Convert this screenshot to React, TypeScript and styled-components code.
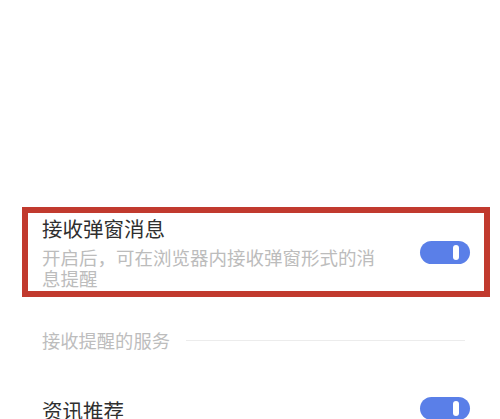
import React from "react";
import styled, { createGlobalStyle } from "styled-components";

const Global = createGlobalStyle`
  html, body { margin: 0; padding: 0; background: #ffffff; }
  body { font-family: "Noto Sans CJK SC", "Noto Sans", sans-serif; }
`;

const Page = styled.div`
  width: 500px;
  height: 419px;
  overflow: hidden;
  padding-top: 207px;
  box-sizing: border-box;
  background: #ffffff;
`;

const HighlightBox = styled.div`
  margin-left: 22px;
  width: 468px;
  box-sizing: border-box;
  border: 6px solid #c13a2e;
  padding: 3px 14px 2px 14px;
  display: flex;
  align-items: center;
`;

const TextCol = styled.div`
  width: 343px;
  display: flex;
  flex-direction: column;
`;

const Title = styled.div`
  font-size: 20.5px;
  line-height: 24px;
  color: #2f2f2f;
`;

const Desc = styled.div`
  margin-top: 7px;
  font-size: 18.5px;
  line-height: 21px;
  color: #bcbcbc;
`;

const Spacer = styled.div`
  flex: 1;
`;

const Toggle = styled.div`
  position: relative;
  width: 50px;
  height: 23px;
  border-radius: 12px;
  background: #5a7fe8;
  flex-shrink: 0;
`;

const Knob = styled.div`
  position: absolute;
  right: 11px;
  top: 4px;
  width: 6px;
  height: 15px;
  border-radius: 3px;
  background: #ffffff;
`;

const SectionLabel = styled.div`
  margin-top: 31px;
  padding: 0 35px 0 42px;
  display: flex;
  align-items: center;
  gap: 16px;
  font-size: 18.3px;
  line-height: 24px;
  color: #bdbdbd;
`;

const Rule = styled.div`
  flex: 1;
  height: 1px;
  background: #ececec;
`;

const Row = styled.div`
  margin-top: 45px;
  padding: 0 30px 0 42px;
  display: flex;
  align-items: flex-start;
`;

const RowTitle = styled.div`
  font-size: 20.5px;
  line-height: 24px;
  color: #2f2f2f;
  flex: 1;
  padding-top: 1px;
`;

const SwitchView = ({ on = true }: { on?: boolean }) => (
  <Toggle aria-checked={on} role="switch">
    <Knob />
  </Toggle>
);

export default function App() {
  return (
    <Page>
      <Global />
      <HighlightBox>
        <TextCol>
          <Title>接收弹窗消息</Title>
          <Desc>开启后，可在浏览器内接收弹窗形式的消息提醒</Desc>
        </TextCol>
        <Spacer />
        <SwitchView />
      </HighlightBox>
      <SectionLabel>
        <span>接收提醒的服务</span>
        <Rule />
      </SectionLabel>
      <Row>
        <RowTitle>资讯推荐</RowTitle>
        <SwitchView />
      </Row>
    </Page>
  );
}
